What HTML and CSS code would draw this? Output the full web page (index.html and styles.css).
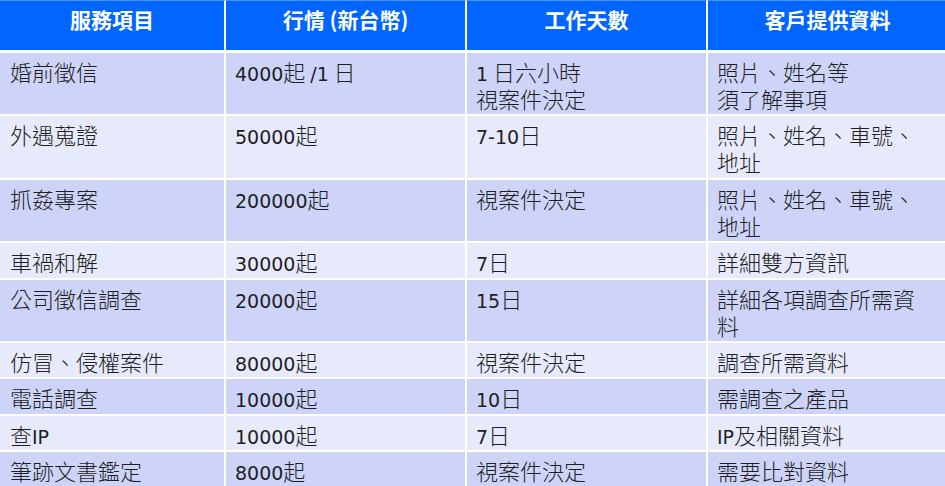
FILE: index.html
```html
<!DOCTYPE html>
<html lang="zh-Hant">
<head>
<meta charset="utf-8">
<title>服務項目</title>
<link rel="stylesheet" href="styles.css">
</head>
<body>
<table class="price-table">
  <colgroup>
    <col class="c1"><col class="c2"><col class="c3"><col class="c4">
  </colgroup>
  <thead>
    <tr>
      <th>服務項目</th>
      <th>行情 (新台幣)</th>
      <th>工作天數</th>
      <th>客戶提供資料</th>
    </tr>
  </thead>
  <tbody>
    <tr class="dark">
      <td>婚前徵信</td>
      <td><span class="lat">4000</span>起 <span class="lat">/1</span> 日</td>
      <td><span class="lat">1</span> 日六小時<br>視案件決定</td>
      <td>照片、姓名等<br>須了解事項</td>
    </tr>
    <tr class="light">
      <td>外遇蒐證</td>
      <td><span class="lat">50000</span>起</td>
      <td><span class="lat">7-10</span>日</td>
      <td>照片、姓名、車號、<br>地址</td>
    </tr>
    <tr class="dark">
      <td>抓姦專案</td>
      <td><span class="lat">200000</span>起</td>
      <td>視案件決定</td>
      <td>照片、姓名、車號、<br>地址</td>
    </tr>
    <tr class="light">
      <td>車禍和解</td>
      <td><span class="lat">30000</span>起</td>
      <td><span class="lat">7</span>日</td>
      <td>詳細雙方資訊</td>
    </tr>
    <tr class="dark">
      <td>公司徵信調查</td>
      <td><span class="lat">20000</span>起</td>
      <td><span class="lat">15</span>日</td>
      <td>詳細各項調查所需資<br>料</td>
    </tr>
    <tr class="light">
      <td>仿冒、侵權案件</td>
      <td><span class="lat">80000</span>起</td>
      <td>視案件決定</td>
      <td>調查所需資料</td>
    </tr>
    <tr class="dark">
      <td>電話調查</td>
      <td><span class="lat">10000</span>起</td>
      <td><span class="lat">10</span>日</td>
      <td>需調查之產品</td>
    </tr>
    <tr class="light">
      <td>查<span class="lat">IP</span></td>
      <td><span class="lat">10000</span>起</td>
      <td><span class="lat">7</span>日</td>
      <td><span class="lat">IP</span>及相關資料</td>
    </tr>
    <tr class="dark">
      <td>筆跡文書鑑定</td>
      <td><span class="lat">8000</span>起</td>
      <td>視案件決定</td>
      <td>需要比對資料</td>
    </tr>
  </tbody>
</table>
</body>
</html>
```

FILE: styles.css
```css
html, body {
  margin: 0;
  padding: 0;
  background: #ffffff;
  overflow: hidden;
}

body {
  width: 945px;
  height: 486px;
}

.price-table {
  table-layout: fixed;
  width: 949px;
  border-collapse: separate;
  border-spacing: 0;
  font-family: "Noto Sans CJK TC", "Liberation Sans", sans-serif;
  color: #1e1e24;
}

.c1 { width: 226px; }
.c2 { width: 241px; }
.c3 { width: 241px; }
.c4 { width: 241px; }

.price-table th,
.price-table td {
  box-sizing: border-box;
  border-right: 2px solid #ffffff;
  border-bottom: 2px solid #ffffff;
  text-align: left;
  vertical-align: top;
}

.price-table th {
  background: #0066ff;
  border-top: 1px solid #4d94f5;
  border-bottom: 3px solid #ffffff;
  color: #ffffff;
  font-size: 21px;
  font-weight: 700;
  line-height: 27px;
  height: 53px;
  padding: 5px 0 0;
  text-align: center;
}

.price-table td {
  font-size: 22px;
  font-weight: 300;
  line-height: 27px;
  padding: 5px 6px 2.4px 9px;
}

.price-table td:first-child {
  padding-left: 10px;
}

.dark td { background: #ced4f8; }
.light td { background: #e7eafb; }

.lat {
  font-family: "DejaVu Sans", "Liberation Sans", sans-serif;
  font-size: 19px;
  font-weight: 400;
  line-height: 1;
}
```
